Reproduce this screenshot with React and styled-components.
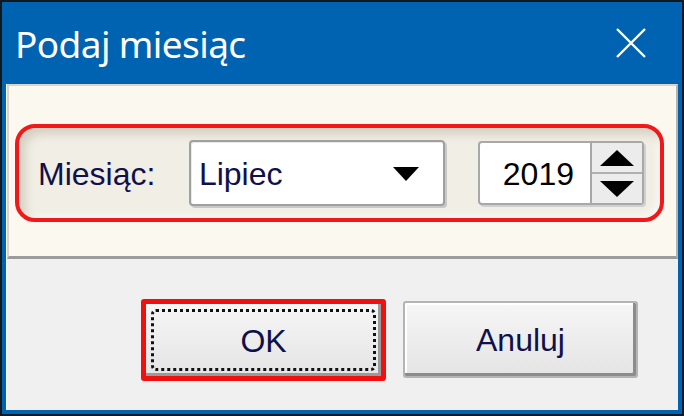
import React from "react";
import styled, { createGlobalStyle } from "styled-components";

const Global = createGlobalStyle`
  html, body { margin: 0; padding: 0; background: #000; }
  #root { width: 684px; height: 416px; }
`;

const Window = styled.div`
  box-sizing: border-box;
  width: 684px;
  height: 416px;
  border: 2px solid #101820;
  background: #0063b1;
  padding: 0 4px 4px 4px;
  display: flex;
  flex-direction: column;
`;

const TitleBar = styled.div`
  height: 82px;
  display: flex;
  align-items: center;
  justify-content: space-between;
  padding: 0 32px 0 9px;
  color: #fff;
  font-family: "Noto Sans", sans-serif;
  font-size: 37px;
  letter-spacing: -0.6px;
`;

const Close = styled.svg`
  width: 30px;
  height: 30px;
`;

const Client = styled.div`
  flex: 1;
  display: flex;
  flex-direction: column;
  background: #f0f0f0;
  border-left: 1px solid #f8f8f8;
`;

const TopPanel = styled.div`
  box-sizing: border-box;
  height: 175px;
  background: #fbf8ef;
  border-top: 2px solid #d8d4c8;
  border-left: 2px solid #d8d4c8;
  border-bottom: 3px solid #9c9c9c;
  border-right: 2px solid #b8b4a8;
  padding: 38px 12px 0 6px;
`;

const Group = styled.div`
  box-sizing: border-box;
  height: 98px;
  border: 4px solid #f01818;
  border-radius: 20px;
  background: #f1eee5;
  box-shadow: inset 6px 6px 10px rgba(160, 150, 130, 0.35), inset -3px -3px 6px rgba(255,255,255,0.6);
  display: flex;
  align-items: center;
  padding: 0 16px 0 19px;
  font-family: "Liberation Sans", Arial, sans-serif;
  font-size: 32px;
  color: #10104a;
`;

const Label = styled.span`
  width: 152px;
  padding-top: 2px;
`;

const Combo = styled.div`
  box-sizing: border-box;
  width: 258px;
  height: 66px;
  background: #fff;
  border: 2px solid #a0a0a0;
  border-radius: 4px;
  box-shadow: 2px 2px 0 #c8c8c8, inset 1px 1px 0 #e8e8e8;
  display: flex;
  align-items: center;
  justify-content: space-between;
  padding: 2px 24px 0 8px;
`;

const Arrow = styled.svg`
  width: 26px;
  height: 14px;
`;

const Spin = styled.div`
  box-sizing: border-box;
  margin-left: 33px;
  width: 167px;
  height: 64px;
  display: flex;
  background: #fff;
  border: 2px solid #a8a8a8;
  border-radius: 4px;
  box-shadow: 2px 2px 0 #d0d0d0;
`;

const SpinValue = styled.div`
  flex: 1;
  display: flex;
  align-items: center;
  justify-content: flex-end;
  padding: 2px 16px 0 0;
  color: #000;
`;

const SpinButtons = styled.div`
  width: 50px;
  display: flex;
  flex-direction: column;
  border-left: 2px solid #a8a8a8;
  background: #ececec;
`;

const SpinBtn = styled.div`
  flex: 1;
  display: flex;
  align-items: center;
  justify-content: center;
  border-top: ${(p) => (p.$bottom ? "2px solid #b0b0b0" : "none")};
`;

const Footer = styled.div`
  flex: 1;
  display: flex;
  justify-content: flex-end;
  align-items: flex-start;
  padding: 40px 40px 0 0;
  gap: 17px;
`;

const Button = styled.div`
  box-sizing: border-box;
  width: ${(p) => p.$w}px;
  height: ${(p) => p.$h}px;
  margin-top: ${(p) => (p.$primary ? 0 : 2)}px;
  border: ${(p) => (p.$primary ? "5px solid #f01010" : "2px solid #b4b4b4")};
  border-radius: 3px;
  background: linear-gradient(#f6f6f6, #e4e4e4);
  box-shadow: ${(p) => (p.$primary ? "inset -3px -3px 0 #9a9a9a" : "inset -3px -3px 0 #8c8c8c, inset 2px 2px 0 #fff")};
  display: flex;
  align-items: center;
  justify-content: center;
  padding: ${(p) => (p.$primary ? "5px" : "0")};
  font-family: "Liberation Sans", Arial, sans-serif;
  font-size: 32px;
  color: #10104a;
`;

const Focus = styled.div`
  box-sizing: border-box;
  width: 100%;
  height: 100%;
  border: 3px dotted #111;
  border-radius: 5px;
  display: flex;
  align-items: center;
  justify-content: center;
  padding-top: 2px;
`;

const Caption = styled.span`
  padding-top: 2px;
`;

export default function App() {
  return (
    <>
      <Global />
      <Window>
        <TitleBar>
          <span>Podaj miesiąc</span>
          <Close viewBox="0 0 30 30">
            <path d="M1 1 L29 29 M29 1 L1 29" stroke="#fff" strokeWidth="2.4" fill="none" />
          </Close>
        </TitleBar>
        <Client>
          <TopPanel>
            <Group>
              <Label>Miesiąc:</Label>
              <Combo>
                <span>Lipiec</span>
                <Arrow viewBox="0 0 26 14">
                  <path d="M0 0 H26 L13 14 Z" fill="#000" />
                </Arrow>
              </Combo>
              <Spin>
                <SpinValue>2019</SpinValue>
                <SpinButtons>
                  <SpinBtn>
                    <svg width="34" height="16" viewBox="0 0 34 16"><path d="M0 16 L17 0 L34 16 Z" fill="#000" /></svg>
                  </SpinBtn>
                  <SpinBtn $bottom>
                    <svg width="34" height="16" viewBox="0 0 34 16"><path d="M0 0 L34 0 L17 16 Z" fill="#000" /></svg>
                  </SpinBtn>
                </SpinButtons>
              </Spin>
            </Group>
          </TopPanel>
          <Footer>
            <Button $primary $w={245} $h={82}>
              <Focus>OK</Focus>
            </Button>
            <Button $w={235} $h={77}>
              <Caption>Anuluj</Caption>
            </Button>
          </Footer>
        </Client>
      </Window>
    </>
  );
}
